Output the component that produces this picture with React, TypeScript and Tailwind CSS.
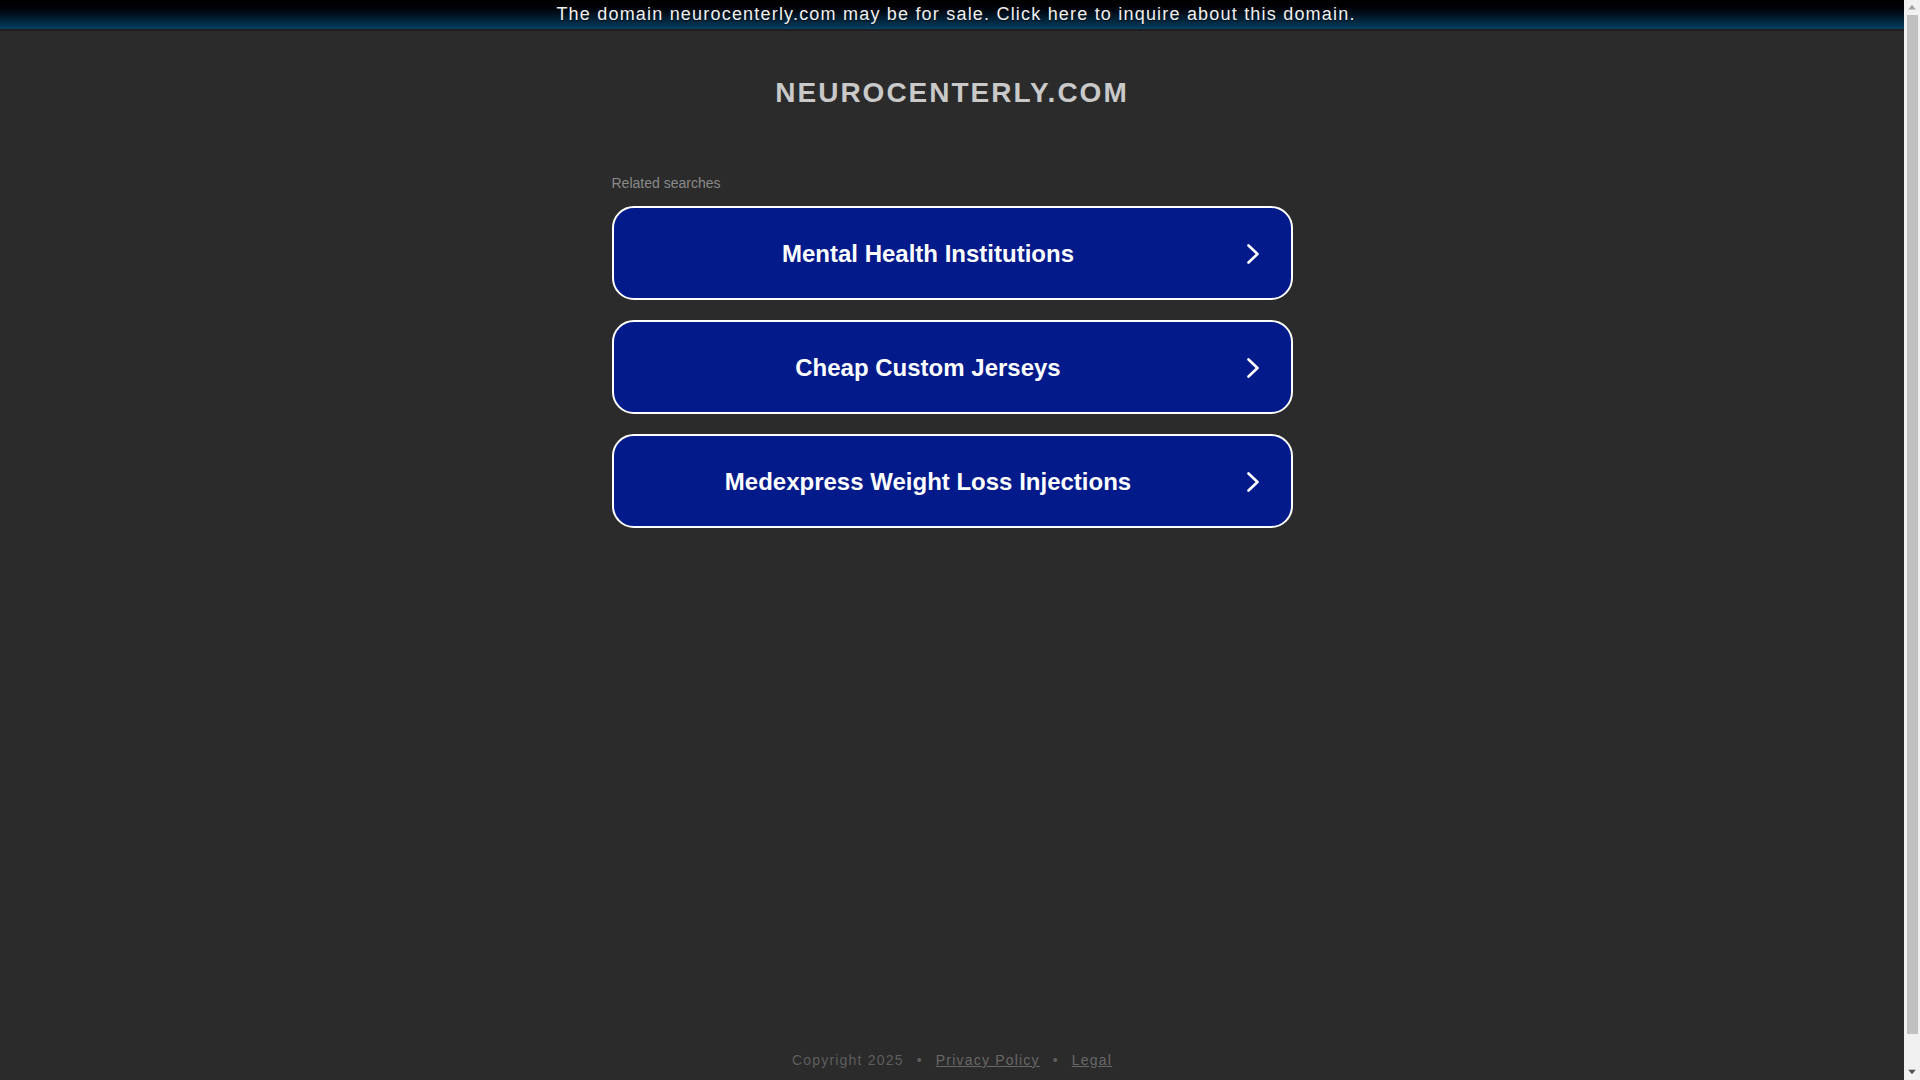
const searches = [
  "Mental Health Institutions",
  "Cheap Custom Jerseys",
  "Medexpress Weight Loss Injections",
];

function Chevron() {
  return (
    <svg viewBox="0 0 20 20" className="w-[20px] h-[20px] shrink-0" fill="none">
      <polyline
        points="5.5,1.5 14.5,10 5.5,18.5"
        stroke="white"
        strokeWidth="2.6"
        strokeLinecap="round"
        strokeLinejoin="round"
      />
    </svg>
  );
}

// browser scrollbar as seen in the screenshot (page is a bit taller than the window)
function Scrollbar() {
  return (
    <div className="fixed top-0 right-0 w-[16px] h-screen bg-[#f1f1f1] flex flex-col items-center">
      <svg viewBox="0 0 16 16" className="w-[16px] h-[15px] shrink-0">
        <polygon points="4,10 12,10 8,5" fill="#a3a3a3" />
      </svg>
      <div className="w-[11px] flex-1 bg-[#c1c1c1] mb-[30px]" />
      <svg viewBox="0 0 16 16" className="w-[16px] h-[15px] shrink-0 mb-[1px]">
        <polygon points="4,6 12,6 8,11" fill="#505050" />
      </svg>
    </div>
  );
}

export default function App() {
  return (
    <div className="flex bg-[#2b2b2b]">
      <div
        className="w-[calc(100%-16px)] min-h-[1110px] flex flex-col bg-[#2b2b2b]"
        style={{ fontFamily: '"Liberation Sans", Arial, sans-serif' }}
      >
        {/* Sale banner */}
        <div className="h-[31px] bg-gradient-to-b from-[#000000] to-[#064063] border-b-2 border-[#1e1e1e] flex justify-center">
          <a className="ml-[8px] pt-[4px] text-[18px] leading-[21px] tracking-[1.2px] text-[#f0f0f0] cursor-pointer [text-shadow:0_1px_1px_rgba(0,0,0,0.6)]">
            The domain neurocenterly.com may be for sale. Click here to inquire about this domain.
          </a>
        </div>

        {/* Domain title */}
        <h1 className="mt-[46px] text-center text-[28px] leading-[32px] font-bold tracking-[2px] text-[#c9c9c9]">
          NEUROCENTERLY.COM
        </h1>

        {/* Related searches */}
        <div className="mt-[66px] w-[681px] mx-auto">
          <p className="text-[14px] leading-[16px] text-[#8a8a8a]">Related searches</p>
          <div className="mt-[15px] flex flex-col gap-[20px]">
            {searches.map((s) => (
              <a
                key={s}
                className="h-[94px] flex items-center pt-[2px] pr-[28px] bg-[#021a8a] border-2 border-white rounded-[22px] cursor-pointer"
              >
                <span className="flex-1 text-center text-[24px] font-bold text-white">{s}</span>
                <Chevron />
              </a>
            ))}
          </div>
        </div>

        <div className="flex-1" />

        {/* Footer */}
        <footer className="pb-[40px] flex justify-center text-[14px] leading-[20px] tracking-[1.2px] text-[#5e5e5e]">
          <span>Copyright 2025</span>
          <span className="mx-[13px]">•</span>
          <a className="underline text-[#686868] cursor-pointer">Privacy Policy</a>
          <span className="mx-[13px]">•</span>
          <a className="underline text-[#686868] cursor-pointer">Legal</a>
        </footer>
      </div>
      <Scrollbar />
    </div>
  );
}
